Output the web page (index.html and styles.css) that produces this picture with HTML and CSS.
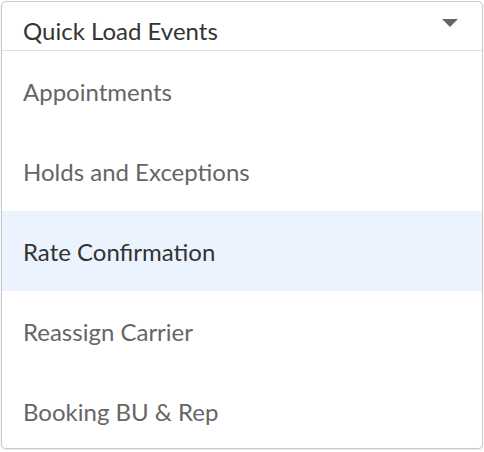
FILE: index.html
```html
<!DOCTYPE html>
<html lang="en">
<head>
    <meta charset="UTF-8">
    <title>Quick Load Events</title>
    <link rel="stylesheet" href="styles.css">
</head>
<body>
    <div class="dropdown">
        <div class="dropdown-header">
            <span class="dropdown-title">Quick Load Events</span>
            <span class="caret"></span>
        </div>
        <ul class="dropdown-list">
            <li class="dropdown-item">Appointments</li>
            <li class="dropdown-item">Holds and Exceptions</li>
            <li class="dropdown-item active">Rate Confirmation</li>
            <li class="dropdown-item">Reassign Carrier</li>
            <li class="dropdown-item">Booking BU &amp; Rep</li>
        </ul>
    </div>
</body>
</html>
```

FILE: styles.css
```css
* {
    margin: 0;
    padding: 0;
    box-sizing: border-box;
}

body {
    font-family: 'Lato', 'Open Sans', sans-serif;
    background-color: #ffffff;
    color: #333;
}

.dropdown {
    margin: 1px;
    width: 482px;
    height: 448px;
    border: 1px solid #c9c9c9;
    border-radius: 5px;
    overflow: hidden;
    box-shadow: 0 1px 2px rgba(0, 0, 0, 0.12);
}

.dropdown-header {
    display: flex;
    align-items: flex-start;
    justify-content: space-between;
    height: 49px;
    padding: 0 21px;
    border-bottom: 1px solid #e0e0e0;
}

.dropdown-title {
    font-size: 24px;
    line-height: 29px;
    color: #333;
    margin-top: 14px;
}

.caret {
    width: 0;
    height: 0;
    border-left: 8px solid transparent;
    border-right: 8px solid transparent;
    border-top: 8px solid #666;
    margin-top: 17px;
    margin-right: 3px;
}

.dropdown-list {
    list-style: none;
}

.dropdown-item {
    display: flex;
    align-items: center;
    height: 80px;
    padding: 0 21px;
    font-size: 24px;
    color: #666;
}

.dropdown-item.active {
    background-color: #ebf3fe;
    color: #333;
}
```
